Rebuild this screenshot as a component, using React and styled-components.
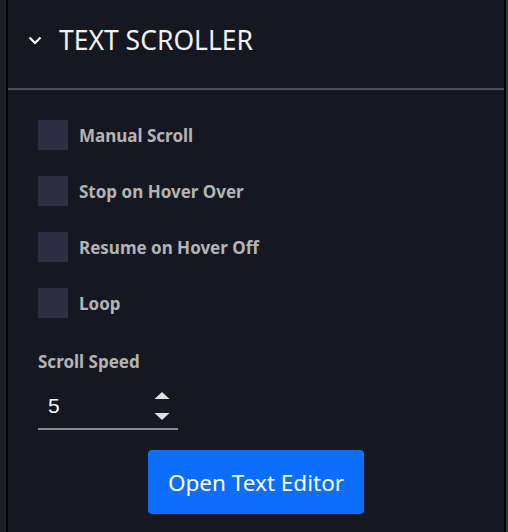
import React from "react";
import styled, { createGlobalStyle } from "styled-components";

const Global = createGlobalStyle`
  html, body { margin: 0; padding: 0; background: #1a1c25; }
  body { font-family: "Noto Sans", "Open Sans", sans-serif; }
`;

const Page = styled.div`
  display: flex;
  width: 508px;
  height: 532px;
  overflow: hidden;
`;

const LeftStrip = styled.div`
  width: 6px;
  background: #1b1d26;
`;

const RightStrip = styled.div`
  width: 2px;
  background: #1f3a44;
`;

const Panel = styled.div`
  flex: 1;
  background: #161821;
  border-left: 2px solid #000;
  border-right: 2px solid #000;
  display: flex;
  flex-direction: column;
`;

const Header = styled.div`
  display: flex;
  align-items: center;
  padding: 0 0 8px 20px;
  gap: 17px;
  border-bottom: 2px solid #4a4c58;
  box-sizing: border-box;
  height: 90px;
`;

const Title = styled.span`
  color: #f2f2f2;
  font-size: 26.5px;
  font-weight: 400;
`;

const Body = styled.div`
  padding: 30px 0 0 30px;
  display: flex;
  flex-direction: column;
`;

const CheckRow = styled.label`
  display: flex;
  align-items: center;
  gap: 11px;
  height: 30px;
  margin-bottom: 26px;
`;

const Box = styled.span`
  width: 30px;
  height: 30px;
  background: #2e2f43;
  flex: none;
`;

const Label = styled.span`
  color: #b4b4b4;
  font-weight: 700;
  font-size: 17px;
`;

const FieldLabel = styled.div`
  color: #b4b4b4;
  font-weight: 700;
  font-size: 17px;
  margin-top: 6px;
`;

const NumberField = styled.div`
  width: 140px;
  height: 50px;
  box-sizing: border-box;
  border-bottom: 2px solid #8a8b98;
  display: flex;
  align-items: center;
  justify-content: space-between;
  padding: 4px 8px 0 10px;
  margin-top: 7px;
`;

const Value = styled.span`
  color: #ffffff;
  font-family: "Liberation Sans", Arial, sans-serif;
  font-size: 21px;
`;

const Spinner = styled.div`
  display: flex;
  flex-direction: column;
  gap: 14px;
`;

const ButtonRow = styled.div`
  display: flex;
  justify-content: center;
  padding-top: 20px;
`;

const Button = styled.button`
  background: #0d6efd;
  color: #fff;
  border: none;
  border-radius: 4px;
  width: 216px;
  height: 64px;
  font-family: "Noto Sans", sans-serif;
  font-size: 22.5px;
  cursor: pointer;
`;

const Chevron = () => (
  <svg width="14" height="9" viewBox="0 0 14 9">
    <path d="M1.5 1.5 L7 7 L12.5 1.5" fill="none" stroke="#fff" strokeWidth="2.2" />
  </svg>
);

const Tri = ({ up }) => (
  <svg width="16" height="7" viewBox="0 0 16 7">
    <path d={up ? "M0.5 7 L8 0 L15.5 7 Z" : "M0.5 0 L15.5 0 L8 7 Z"} fill="#e0e0e0" />
  </svg>
);

const options = ["Manual Scroll", "Stop on Hover Over", "Resume on Hover Off", "Loop"];

export default function App() {
  return (
    <>
      <Global />
      <Page>
        <LeftStrip />
        <Panel>
          <Header>
            <Chevron />
            <Title>TEXT SCROLLER</Title>
          </Header>
          <Body>
            {options.map((o) => (
              <CheckRow key={o}>
                <Box />
                <Label>{o}</Label>
              </CheckRow>
            ))}
            <FieldLabel>Scroll Speed</FieldLabel>
            <NumberField>
              <Value>5</Value>
              <Spinner>
                <Tri up />
                <Tri />
              </Spinner>
            </NumberField>
          </Body>
          <ButtonRow>
            <Button>Open Text Editor</Button>
          </ButtonRow>
        </Panel>
        <RightStrip />
      </Page>
    </>
  );
}
